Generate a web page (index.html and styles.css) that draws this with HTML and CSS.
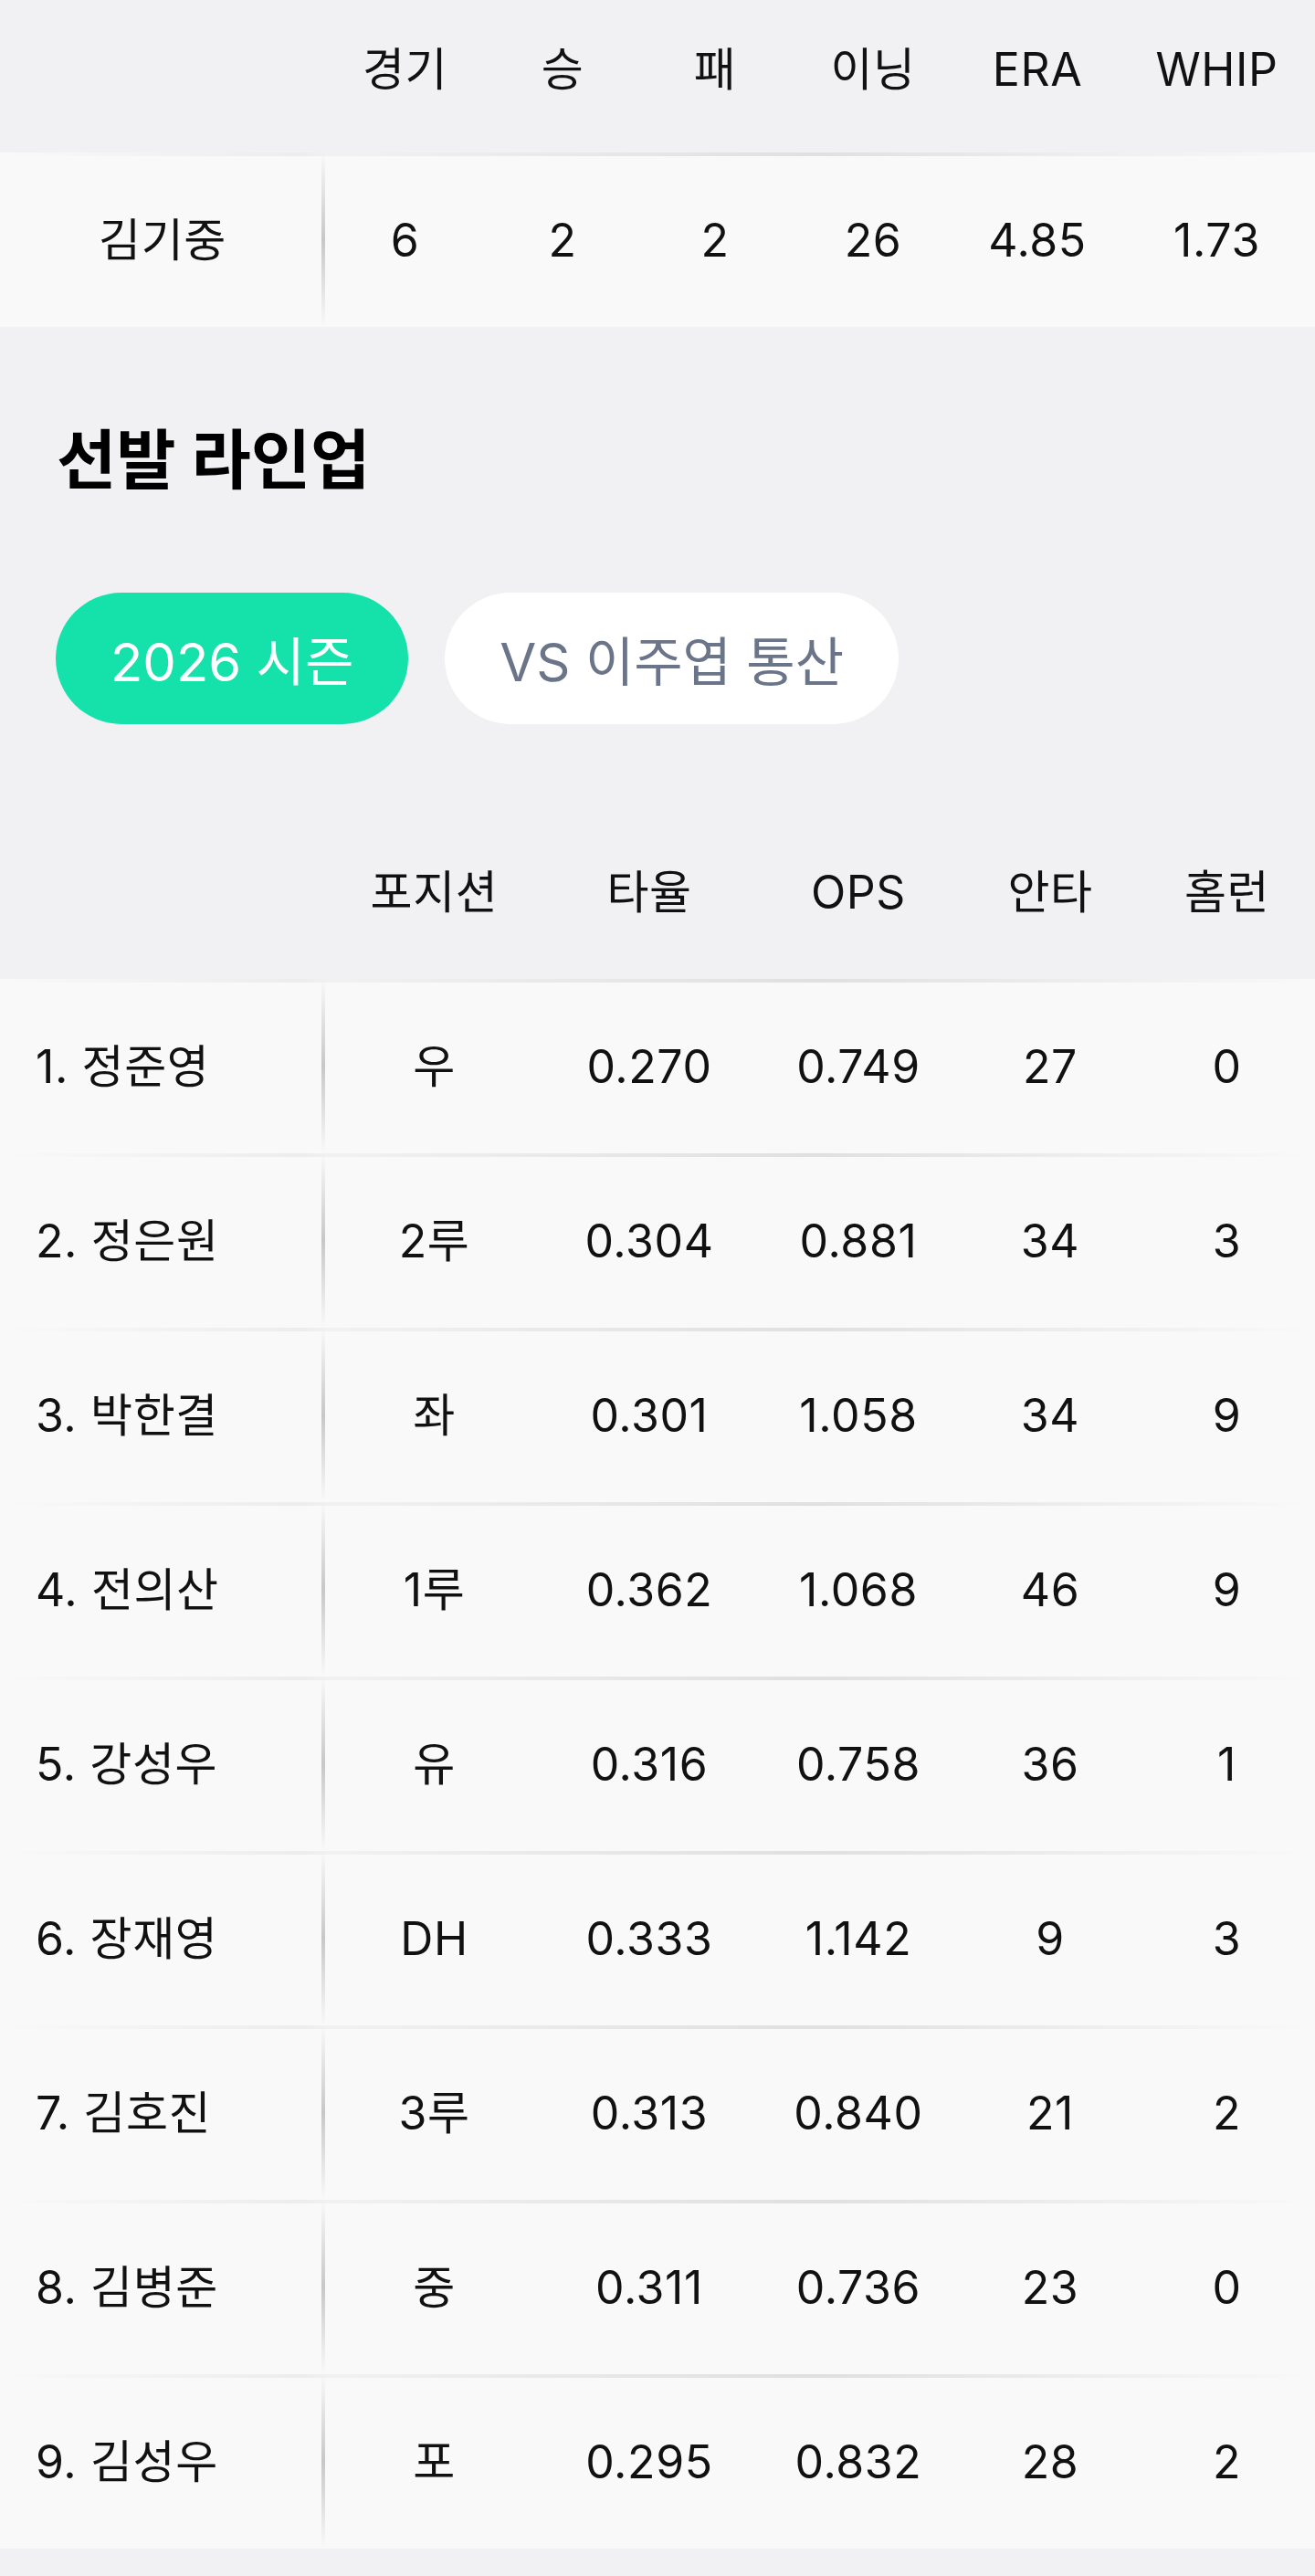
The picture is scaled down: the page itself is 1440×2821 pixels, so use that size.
FILE: index.html
```html
<!DOCTYPE html>
<html lang="ko">
<head>
  <meta charset="UTF-8">
  <title>선발 라인업</title>
  <link rel="stylesheet" href="styles.css">
</head>
<body>

  <!-- 선발 투수 -->
  <section class="pitcher">
    <div class="row head">
      <div class="cell first"></div>
      <div class="cell">경기</div>
      <div class="cell">승</div>
      <div class="cell">패</div>
      <div class="cell">이닝</div>
      <div class="cell">ERA</div>
      <div class="cell">WHIP</div>
    </div>
    <div class="row data">
      <div class="cell first">김기중</div>
      <div class="cell">6</div>
      <div class="cell">2</div>
      <div class="cell">2</div>
      <div class="cell">26</div>
      <div class="cell">4.85</div>
      <div class="cell">1.73</div>
    </div>
  </section>

  <!-- 선발 라인업 -->
  <section class="lineup">
    <h2 class="section-title">선발 라인업</h2>
    <div class="tabs">
      <button class="tab active">2026 시즌</button>
      <button class="tab">VS 이주엽 통산</button>
    </div>

    <div class="lineup-table">
      <div class="row head">
        <div class="cell first"></div>
        <div class="cell">포지션</div>
        <div class="cell">타율</div>
        <div class="cell">OPS</div>
        <div class="cell">안타</div>
        <div class="cell">홈런</div>
      </div>
      <div class="row data">
        <div class="cell first">1. 정준영</div>
        <div class="cell">우</div>
        <div class="cell">0.270</div>
        <div class="cell">0.749</div>
        <div class="cell">27</div>
        <div class="cell">0</div>
      </div>
      <div class="row data">
        <div class="cell first">2. 정은원</div>
        <div class="cell">2루</div>
        <div class="cell">0.304</div>
        <div class="cell">0.881</div>
        <div class="cell">34</div>
        <div class="cell">3</div>
      </div>
      <div class="row data">
        <div class="cell first">3. 박한결</div>
        <div class="cell">좌</div>
        <div class="cell">0.301</div>
        <div class="cell">1.058</div>
        <div class="cell">34</div>
        <div class="cell">9</div>
      </div>
      <div class="row data">
        <div class="cell first">4. 전의산</div>
        <div class="cell">1루</div>
        <div class="cell">0.362</div>
        <div class="cell">1.068</div>
        <div class="cell">46</div>
        <div class="cell">9</div>
      </div>
      <div class="row data">
        <div class="cell first">5. 강성우</div>
        <div class="cell">유</div>
        <div class="cell">0.316</div>
        <div class="cell">0.758</div>
        <div class="cell">36</div>
        <div class="cell">1</div>
      </div>
      <div class="row data">
        <div class="cell first">6. 장재영</div>
        <div class="cell">DH</div>
        <div class="cell">0.333</div>
        <div class="cell">1.142</div>
        <div class="cell">9</div>
        <div class="cell">3</div>
      </div>
      <div class="row data">
        <div class="cell first">7. 김호진</div>
        <div class="cell">3루</div>
        <div class="cell">0.313</div>
        <div class="cell">0.840</div>
        <div class="cell">21</div>
        <div class="cell">2</div>
      </div>
      <div class="row data">
        <div class="cell first">8. 김병준</div>
        <div class="cell">중</div>
        <div class="cell">0.311</div>
        <div class="cell">0.736</div>
        <div class="cell">23</div>
        <div class="cell">0</div>
      </div>
      <div class="row data">
        <div class="cell first">9. 김성우</div>
        <div class="cell">포</div>
        <div class="cell">0.295</div>
        <div class="cell">0.832</div>
        <div class="cell">28</div>
        <div class="cell">2</div>
      </div>
    </div>
  </section>

</body>
</html>
```

FILE: styles.css
```css
body {
  margin: 0;
  background: #f1f1f3;
  font-family: Inter, "Noto Sans CJK KR", sans-serif;
  color: #111;
}

.row {
  display: grid;
  align-items: center;
  text-align: center;
  font-size: 50px;
  letter-spacing: 0.6px;
  line-height: 1.2;
}

.pitcher .row {
  grid-template-columns: 356px 175px 170px 164px 182px 178px 1fr;
}

.lineup-table .row {
  grid-template-columns: 356px 239px 232px 226px 194px 1fr;
}

.row.head {
  height: 190px;
}

.pitcher .row.head {
  height: 167px;
  padding-bottom: 16px;
  box-sizing: border-box;
}

.row.data {
  height: 191px;
  background-color: #f9f9f9;
  background-image: linear-gradient(to right,
    rgba(0, 0, 0, 0) 0%,
    rgba(0, 0, 0, 0.05) 23%,
    rgba(0, 0, 0, 0.03) 25%,
    rgba(0, 0, 0, 0.1) 62%,
    rgba(0, 0, 0, 0.04) 85%,
    rgba(0, 0, 0, 0) 100%);
  background-size: 100% 4px;
  background-repeat: no-repeat;
}

.row.data .cell.first {
  align-self: stretch;
  display: flex;
  align-items: center;
  justify-content: center;
  background: linear-gradient(to bottom,
    rgba(0, 0, 0, 0) 0%,
    rgba(0, 0, 0, 0.2) 50%,
    rgba(0, 0, 0, 0) 100%) right top / 4px 100% no-repeat;
}

.lineup-table .row.data .cell.first {
  justify-content: flex-start;
  padding-left: 39px;
}

.section-title {
  margin: 0;
  padding: 102px 62px 0;
  font-size: 71px;
  font-weight: 700;
  line-height: 86px;
  color: #000;
}

.tabs {
  display: flex;
  gap: 40px;
  padding: 103px 61px 0;
  margin-bottom: 89px;
}

.tab {
  height: 144px;
  padding: 0 60px;
  border: none;
  border-radius: 72px;
  background: #fff;
  color: #6b7589;
  font-family: Inter, "Noto Sans CJK KR", sans-serif;
  font-size: 58px;
  font-weight: 400;
  cursor: pointer;
}

.tab.active {
  background: #14e2aa;
  color: #fff;
}
```
